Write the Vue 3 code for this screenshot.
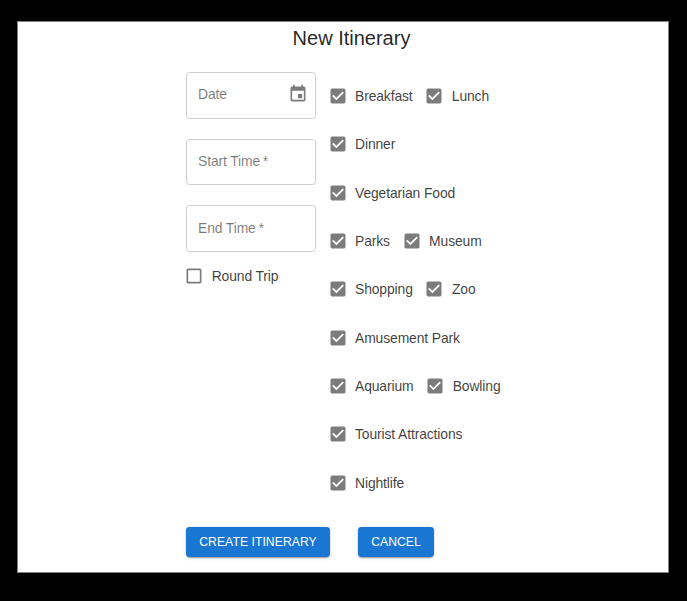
<script setup>
const fields = [
  { label: 'Date', required: false, icon: true },
  { label: 'Start Time', required: true, icon: false },
  { label: 'End Time', required: true, icon: false },
]
const rows = [
  ['Breakfast', 'Lunch'],
  ['Dinner'],
  ['Vegetarian Food'],
  ['Parks', 'Museum'],
  ['Shopping', 'Zoo'],
  ['Amusement Park'],
  ['Aquarium', 'Bowling'],
  ['Tourist Attractions'],
  ['Nightlife'],
]
</script>

<template>
  <div class="backdrop">
    <main class="card">
      <h1 class="title">New Itinerary</h1>
      <div class="columns">
        <div class="fields">
          <div v-for="f in fields" :key="f.label" class="field">
            <span>{{ f.label }}<span v-if="f.required" class="star"> *</span></span>
            <svg v-if="f.icon" class="icon" viewBox="0 0 24 24">
              <path d="M17 12h-5v5h5v-5zM16 1v2H8V1H6v2H5c-1.11 0-1.99.9-1.99 2L3 19c0 1.1.89 2 2 2h14c1.1 0 2-.9 2-2V5c0-1.1-.9-2-2-2h-1V1h-2zm3 18H5V8h14v11z" />
            </svg>
          </div>
          <label class="round">
            <svg class="icon" viewBox="0 0 24 24">
              <path d="M19 5v14H5V5h14m0-2H5c-1.1 0-2 .9-2 2v14c0 1.1.9 2 2 2h14c1.1 0 2-.9 2-2V5c0-1.1-.9-2-2-2z" />
            </svg>
            <span>Round Trip</span>
          </label>
        </div>
        <div class="options">
          <div v-for="(row, i) in rows" :key="i" class="row">
            <label v-for="name in row" :key="name" class="check">
              <svg class="icon" viewBox="0 0 24 24">
                <path d="M19 3H5c-1.11 0-2 .9-2 2v14c0 1.1.89 2 2 2h14c1.11 0 2-.9 2-2V5c0-1.1-.89-2-2-2zm-9 14l-5-5 1.41-1.41L10 14.17l7.59-7.59L19 8l-9 9z" />
              </svg>
              <span>{{ name }}</span>
            </label>
          </div>
        </div>
      </div>
      <div class="actions">
        <button class="btn create" type="button">CREATE ITINERARY</button>
        <button class="btn cancel" type="button">CANCEL</button>
      </div>
    </main>
  </div>
</template>

<style>
body {
  background: #000;
}
</style>

<style scoped>
.backdrop {
  box-sizing: border-box;
  height: 601px;
  padding: 21px 18px 28px 17px;
  background: #000;
  font-family: "Liberation Sans", Arial, sans-serif;
  font-size: 13.9px;
  letter-spacing: -0.12px;
  color: rgba(0, 0, 0, 0.77);
}
.card {
  box-sizing: border-box;
  height: 552px;
  border: 1px solid #808080;
  background: #fff;
}
.title {
  margin: 3px 0 0;
  padding-left: 17px;
  height: 27px;
  line-height: 27px;
  text-align: center;
  font-size: 20px;
  font-weight: 400;
  letter-spacing: 0;
  color: rgba(0, 0, 0, 0.87);
}
.columns {
  display: flex;
  padding-left: 168px;
  height: 454px;
}
.fields {
  width: 130px;
  padding-top: 20px;
}
.field {
  box-sizing: border-box;
  display: flex;
  align-items: center;
  justify-content: space-between;
  height: 46.7px;
  margin-bottom: 20px;
  padding: 0 7px 2px 11px;
  border: 1px solid #cecece;
  border-radius: 3.5px;
  color: rgba(0, 0, 0, 0.53);
}
.star {
  word-spacing: -1px;
}
.icon {
  display: block;
  flex: none;
  width: 20px;
  height: 20px;
  fill: #7c7c7c;
}
.round {
  display: flex;
  align-items: center;
  gap: 7.7px;
  margin: -6px 0 0 -2px;
  height: 20px;
}
.options {
  padding: 20px 0 0 11.5px;
}
.row {
  display: flex;
  align-items: center;
  gap: 11.7px;
  height: 48.33px;
}
.check {
  display: flex;
  align-items: center;
  gap: 7.5px;
}
.actions {
  display: flex;
  gap: 28px;
  padding: 21px 0 0 168px;
}
.btn {
  height: 30.4px;
  padding: 0;
  border: 0;
  border-radius: 3.4px;
  background: #1976d2;
  color: #fff;
  font-family: inherit;
  font-size: 12.2px;
  letter-spacing: 0.05px;
  box-shadow: 0 2px 1px -1px rgba(0, 0, 0, 0.2), 0 1px 2px rgba(0, 0, 0, 0.14), 0 1px 4px rgba(0, 0, 0, 0.12);
}
.create {
  width: 144px;
}
.cancel {
  width: 76px;
}
</style>
